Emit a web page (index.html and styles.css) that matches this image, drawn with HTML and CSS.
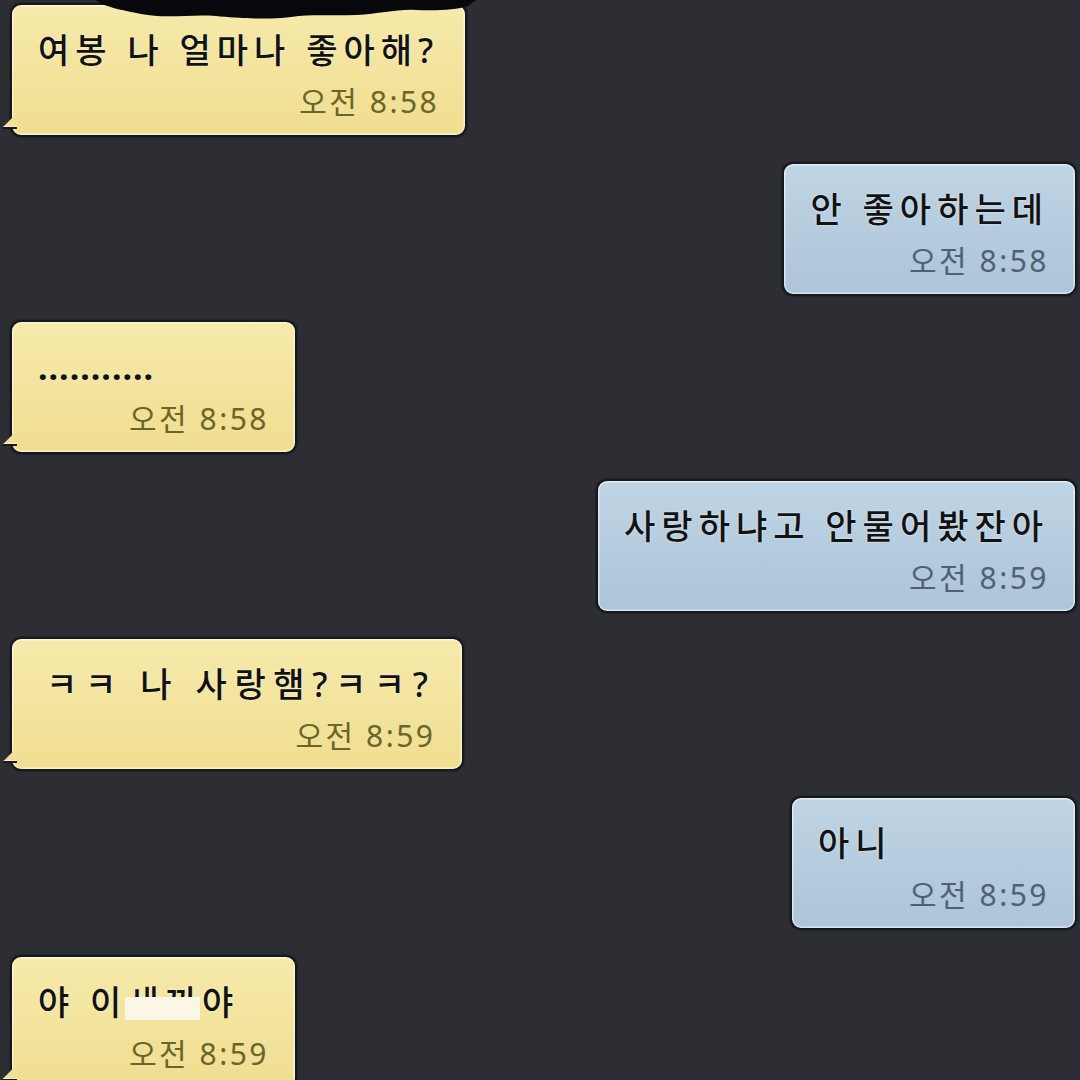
FILE: index.html
```html
<!DOCTYPE html>
<html lang="ko">
<head>
<meta charset="utf-8">
<title>채팅</title>
<link rel="stylesheet" href="styles.css">
</head>
<body>
<div class="chat">
  <div class="bubble bubble-in">
    <div class="msg">여봉 나 얼마나 좋아해?</div>
    <div class="time">오전 8:58</div>
    <svg class="blot" viewBox="0 0 380 24" width="380" height="24" aria-hidden="true">
      <path d="M0 0 H380 L372 6 C360 10 340 11 320 10 C300 9 285 14 260 15 C235 16 215 14 195 17 C170 20 140 18 120 16 C95 14 70 19 45 14 C30 11 15 8 6 4 Z" fill="#07070c"/>
    </svg>
  </div>
  <div class="bubble bubble-out">
    <div class="msg">안 좋아하는데</div>
    <div class="time">오전 8:58</div>
  </div>
  <div class="bubble bubble-in">
    <div class="msg"><span class="dots">...........</span></div>
    <div class="time">오전 8:58</div>
  </div>
  <div class="bubble bubble-out">
    <div class="msg">사랑하냐고 안물어봤잔아</div>
    <div class="time">오전 8:59</div>
  </div>
  <div class="bubble bubble-in">
    <div class="msg msg-indent">ㅋㅋ 나 사랑햄?ㅋㅋ?</div>
    <div class="time">오전 8:59</div>
  </div>
  <div class="bubble bubble-out">
    <div class="msg">아니</div>
    <div class="time">오전 8:59</div>
  </div>
  <div class="bubble bubble-in">
    <div class="msg">야 이<span class="censor">새끼</span>야</div>
    <div class="time">오전 8:59</div>
  </div>
</div>
</body>
</html>
```
FILE: styles.css
```css
* { box-sizing: border-box; }

html, body {
  margin: 0;
  padding: 0;
  width: 1080px;
  height: 1080px;
  overflow: hidden;
  background: #2c2e34;
}

body {
  font-family: "Noto Sans", "Noto Sans CJK KR", sans-serif;
  color: #121212;
}

.chat {
  display: flex;
  flex-direction: column;
  gap: 24.6px;
  padding: 3px 3px 0 10px;
}

.bubble {
  position: relative;
  width: fit-content;
  min-width: 287px;
  height: 134px;
  padding: 25px 26px 13px 26px;
  border: 2px solid #17181b;
  border-radius: 11px;
  box-shadow: inset 0 0 0 1.5px rgba(255, 255, 255, 0.55), 0 0 2px rgba(0, 0, 0, 0.6);
  display: flex;
  flex-direction: column;
  gap: 12px;
}

.bubble-in {
  align-self: flex-start;
  background: linear-gradient(180deg, #f6eaab 0%, #f2e39c 55%, #f0de90 100%);
}

.bubble-in::before {
  content: "";
  position: absolute;
  left: -11px;
  bottom: 6px;
  width: 14px;
  height: 14px;
  background: #f1e096;
  border-left: 2px solid #17181b;
  border-bottom: 2px solid #17181b;
  clip-path: polygon(0 100%, 100% 0, 100% 100%);
  box-shadow: inset 1px -1px 0 rgba(255,255,255,0.5);
}

.bubble-out {
  align-self: flex-end;
  background: linear-gradient(180deg, #bfd5e5 0%, #b4cbdd 60%, #adc5d8 100%);
}

.msg {
  font-size: 34px;
  font-weight: 500;
  line-height: 40px;
  letter-spacing: 6px;
  white-space: nowrap;
  text-shadow: 0 0 2px rgba(255, 255, 255, 0.8);
}

.msg-indent {
  padding-left: 8px;
  letter-spacing: 7.6px;
}

.dots {
  letter-spacing: 1px;
  font-weight: 700;
}

.censor {
  position: relative;
  display: inline-block;
}

.censor::after {
  content: "";
  position: absolute;
  left: -2px;
  right: 2px;
  top: 15px;
  bottom: 2px;
  background: #fbf7e6;
}

.time {
  align-self: flex-end;
  font-size: 30px;
  line-height: 40px;
  letter-spacing: 2.5px;
  white-space: nowrap;
}

.bubble-in .time { color: #6a6528; }
.bubble-out .time { color: #4d6277; }

.blot {
  position: absolute;
  top: -5px;
  left: 84px;
}
```
